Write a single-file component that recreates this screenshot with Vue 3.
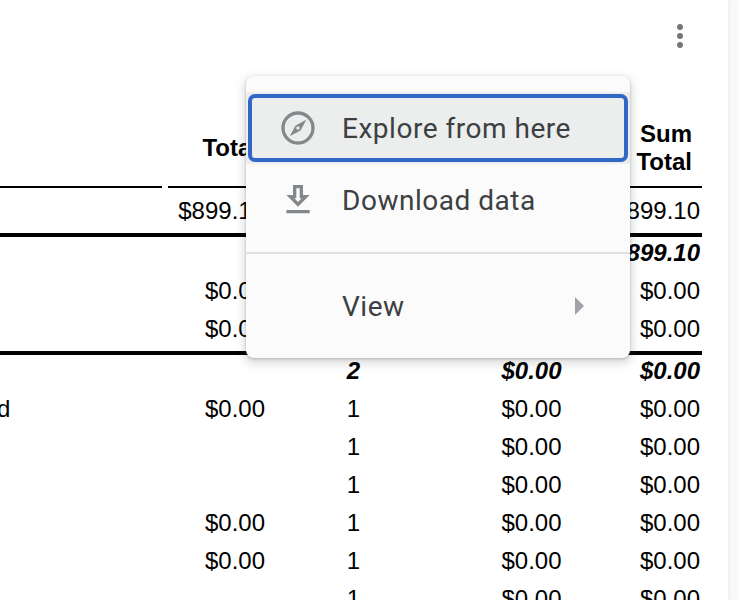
<script setup>
const rows = [
  { kind: 'grand', cells: ['', '$899.10', '', '', '$899.10'] },
  { kind: 'group', cells: ['', '', '', '', '$899.10'] },
  { kind: 'plain', cells: ['', '$0.00', '', '', '$0.00'] },
  { kind: 'plain', cells: ['', '$0.00', '', '', '$0.00'] },
  { kind: 'group last', cells: ['', '', '2', '$0.00', '$0.00'] },
  { kind: 'plain', cells: ['d', '$0.00', '1', '$0.00', '$0.00'] },
  { kind: 'plain', cells: ['', '', '1', '$0.00', '$0.00'] },
  { kind: 'plain', cells: ['', '', '1', '$0.00', '$0.00'] },
  { kind: 'plain', cells: ['', '$0.00', '1', '$0.00', '$0.00'] },
  { kind: 'plain', cells: ['', '$0.00', '1', '$0.00', '$0.00'] },
  { kind: 'plain', cells: ['', '', '1', '$0.00', '$0.00'] }
]
</script>

<template>
  <div class="page">
    <main class="sheet">
      <div class="toolbar">
        <svg class="kebab" viewBox="0 0 8 26" aria-label="More options">
          <circle cx="4" cy="4" r="3" />
          <circle cx="4" cy="13" r="3" />
          <circle cx="4" cy="22" r="3" />
        </svg>
      </div>

      <div class="table">
        <div class="row head">
          <div class="cell"></div>
          <div class="cell">Total</div>
          <div class="cell"></div>
          <div class="cell"></div>
          <div class="cell sum">Sum<br />Total</div>
        </div>
        <div v-for="(row, i) in rows" :key="i" class="row" :class="row.kind">
          <div v-for="(cell, j) in row.cells" :key="j" class="cell">{{ cell }}</div>
        </div>
      </div>

      <div class="menu">
        <div class="item focused">
          <svg class="icon" viewBox="0 0 24 24">
            <circle cx="12" cy="12" r="9" fill="none" stroke="#85888b" stroke-width="2" />
            <path d="M17 7l-6.4 3.5-3.6 6.5 6.5-3.5z" fill="#85888b" />
            <circle cx="12" cy="12" r="1" fill="#eceded" />
          </svg>
          <span>Explore from here</span>
        </div>
        <div class="item">
          <svg class="icon" viewBox="0 0 24 24">
            <path d="M19 9h-4V3H9v6H5l7 7 7-7zm-8 2V5h2v6h1.17L12 13.17 9.83 11H11zm-6 7h14v2H5z" fill="#85888b" />
          </svg>
          <span>Download data</span>
        </div>
        <div class="divider"></div>
        <div class="item">
          <span class="icon"></span>
          <span class="grow">View</span>
          <span class="caret"></span>
        </div>
      </div>
    </main>
  </div>
</template>

<style scoped>
.page {
  display: flex;
  height: 600px;
  overflow: hidden;
  background: #f8f9fa;
}
.sheet {
  position: relative;
  width: 728px;
  flex: none;
  background: #fff;
  box-shadow: 0 0 4px rgba(60, 64, 67, 0.12);
  font-family: "Liberation Sans", Arial, sans-serif;
  font-size: 24px;
  color: #000;
}
.toolbar {
  display: flex;
  justify-content: flex-end;
  align-items: flex-start;
  height: 120px;
  padding: 23px 44px 0 0;
  box-sizing: border-box;
}
.kebab {
  width: 8px;
  height: 26px;
  fill: #757575;
}
.table {
  width: 702px;
}
.row {
  display: grid;
  grid-template-columns: 162px 100px 160px 124px 132px;
  column-gap: 6px;
  align-items: center;
  height: 38px;
  padding-top: 2px;
  line-height: 28px;
  box-sizing: border-box;
  white-space: nowrap;
}
.cell {
  text-align: right;
  padding-right: 3px;
}
.cell:nth-child(1) {
  text-align: left;
  margin-left: -3px;
  padding-right: 0;
}
.cell:nth-child(3) {
  text-align: center;
  padding-right: 1px;
}
.cell:nth-child(4) {
  padding-right: 2.5px;
}
.cell:nth-child(5) {
  padding-right: 2px;
}
.head {
  height: 68px;
  padding-top: 0;
  align-items: start;
  font-weight: 700;
}
.head .cell {
  height: 66px;
  border-bottom: 2px solid #000;
}
.head .cell:nth-child(1) {
  margin-left: 0;
}
.head .cell:nth-child(2) {
  padding-top: 14px;
  height: 52px;
  padding-right: 10px;
}
.head .cell.sum {
  text-align: right;
  padding-right: 10px;
}
.grand {
  height: 45px;
  padding-top: 0;
}
.group {
  height: 38px;
  padding-top: 0;
  border-top: 4px solid #000;
  padding-bottom: 2px;
  font-weight: 700;
  font-style: italic;
}
.last {
  margin-top: 4px;
}
.menu {
  position: absolute;
  left: 246px;
  top: 76px;
  width: 384px;
  height: 282px;
  box-sizing: border-box;
  padding: 16px 0;
  background: #fbfbfb;
  border-radius: 8px;
  box-shadow: 0 1px 3px rgba(60, 64, 67, 0.3), 0 4px 8px 3px rgba(60, 64, 67, 0.15);
  font-family: Roboto, Arial, sans-serif;
  font-size: 28px;
  letter-spacing: 0.52px;
  color: #3c4043;
}
.item {
  display: flex;
  align-items: center;
  gap: 24px;
  height: 72px;
  padding: 0 46px 0 32px;
  box-sizing: border-box;
}
.focused {
  position: relative;
  background: #eceded;
}
.focused::after {
  content: "";
  position: absolute;
  inset: 2px;
  border: 4px solid #3367c6;
  border-radius: 7px;
}
.icon {
  width: 40px;
  height: 40px;
  flex: none;
}
.grow {
  flex: 1;
}
.caret {
  width: 0;
  height: 0;
  border-left: 9px solid #a0a4a8;
  border-top: 9px solid transparent;
  border-bottom: 9px solid transparent;
}
.divider {
  height: 2px;
  margin: 16px 0;
  background: #e0e0e0;
}
</style>
